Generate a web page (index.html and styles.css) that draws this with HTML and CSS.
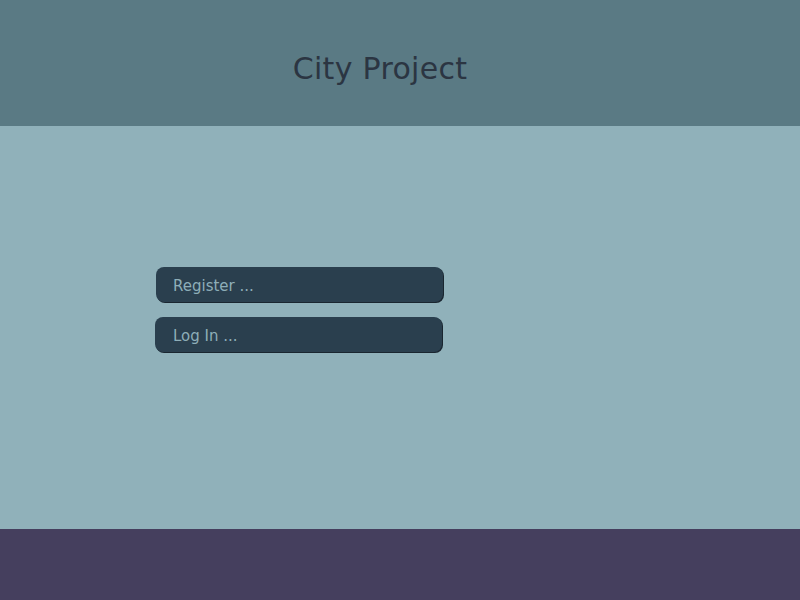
FILE: index.html
```html
<!DOCTYPE html>
<html>
<head>
<meta charset="utf-8">
<link rel="stylesheet" href="styles.css">
</head>
<body>
<header class="header"><h1 class="title">City Project</h1></header>
<main class="main">
  <div class="actions">
    <button class="btn btn-register">Register ...</button>
    <button class="btn btn-login">Log In ...</button>
  </div>
</main>
<footer class="footer"></footer>
</body>
</html>
```
FILE: styles.css
```css
html, body { margin: 0; padding: 0; }
body {
  width: 800px; height: 600px;
  display: flex; flex-direction: column;
  font-family: "DejaVu Sans", Verdana, sans-serif;
}
.header {
  height: 126px; background: #5a7a84;
  box-sizing: border-box;
  padding: 51px 40px 0 0;
  text-align: center;
}
.title {
  margin: 0; font-weight: normal; font-size: 30px; line-height: 35px;
  letter-spacing: 0.3px; color: #2b3542;
}
.main {
  height: 403px; background: #90b1ba;
  display: flex; flex-direction: column;
  padding: 141px 0 0 155px; box-sizing: border-box;
}
.actions { display: flex; flex-direction: column; gap: 15px; }
.btn {
  width: 287px; height: 35px; border: none; border-radius: 8px;
  background: #2a3f4e; color: #8eaeb8;
  font-family: "DejaVu Sans", Verdana, sans-serif; font-size: 15px;
  text-align: left; padding: 2px 0 0 18px;
  box-shadow: 1px 1px 0 #1a2630;
}
.btn-register { margin-left: 1px; padding-left: 17px; }
.footer { height: 71px; background: #453f5e; }
```
